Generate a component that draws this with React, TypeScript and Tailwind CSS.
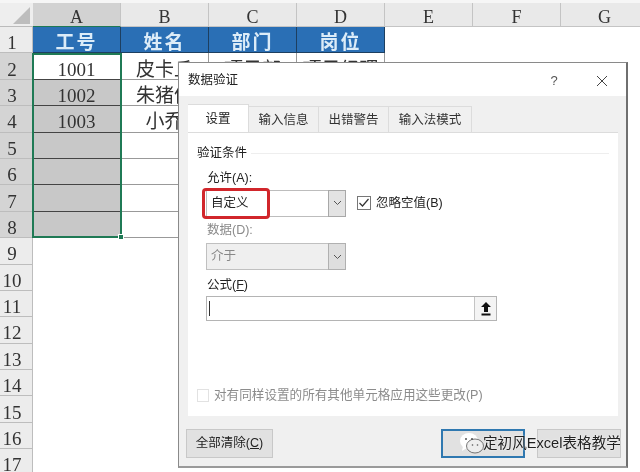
const columns = ['A', 'B', 'C', 'D', 'E', 'F', 'G'];
const rowNumbers = Array.from({ length: 17 }, (_, i) => i + 1);

const cells: Record<number, string[]> = {
    1: ['工号', '姓名', '部门', '岗位'],
    2: ['1001', '皮卡丘', '项目部', '项目经理'],
    3: ['1002', '朱猪侠', '', ''],
    4: ['1003', '小乔', '', ''],
};

const uiFont = "font-['Liberation_Sans','Noto_Sans_CJK_SC',sans-serif]";
const sheetFont = "font-['Liberation_Serif','Noto_Sans_CJK_SC',serif]";

const Sheet = () => (
    <div className={`${sheetFont} w-[640px] h-[472px] overflow-hidden bg-white text-[#333]`}>
        <div className="flex h-[27px] pt-[3px] bg-[#f6f6f6]">
            <div className="relative w-[33px] shrink-0 bg-[#eeeeee] border-b border-[#bbb]">
                <div className="absolute right-[3px] bottom-[2px] w-0 h-0 border-l-[17px] border-l-transparent border-b-[17px] border-b-[#bdbdbd]" />
            </div>
            {columns.map((col) => (
                <div
                    key={col}
                    className={`w-[88px] shrink-0 flex items-center justify-center pt-[5px] leading-none text-[18px] border-b border-r border-[#c4c4c4] ${col === 'A' ? 'bg-[#d2d2d2] border-b-[#1f7a55]' : 'bg-[#e9e9e9]'}`}
                >
                    {col}
                </div>
            ))}
        </div>
        {rowNumbers.map((row) => (
            <div key={row} className="flex h-[26.4px]">
                <div className={`w-[33px] shrink-0 flex items-center justify-center pt-[6px] pr-[8px] leading-none text-[19px] border-b border-r border-[#bdbdbd] ${row >= 2 && row <= 8 ? 'bg-[#d4d4d4]' : 'bg-[#ececec]'}`}>
                    {row}
                </div>
                {columns.map((col, i) => {
                    const text = cells[row]?.[i] ?? '';
                    const isHead = row === 1 && i < 4;
                    const isSelected = i === 0 && row >= 3 && row <= 8;
                    const inTable = i < 4 && row <= 8;
                    return (
                        <div
                            key={col}
                            className={`w-[88px] shrink-0 flex items-center justify-center pt-[6px] leading-none text-[19px] whitespace-nowrap overflow-hidden
                                ${isHead ? 'bg-[#2a6fb5] text-[#dcecf8] font-bold tracking-[2px] border-b border-r border-[#1d3f60]' : ''}
                                ${isSelected ? 'bg-[#c8c8c8]' : ''}
                                ${inTable && !isHead && i === 0 ? 'border-b border-r border-[#444]' : ''}
                                ${inTable && !isHead && i > 0 ? 'border-b border-r border-[#999]' : ''}`}
                        >
                            {text}
                        </div>
                    );
                })}
            </div>
        ))}
    </div>
);

const Tab = ({ label, active, width }: { label: string; active?: boolean; width: string }) => (
    <div
        className={`${width} flex items-center justify-center pt-[2px] text-[12.5px] border-t border-r border-[#dcdcdc] ${active ? 'h-[28px] bg-white -mt-[2px] relative z-10 text-[#222]' : 'h-[26px] bg-[#f0f0f0] text-[#333]'}`}
    >
        {label}
    </div>
);

const Dialog = () => (
    <div className={`${uiFont} absolute left-[178px] top-[62px] w-[450px] h-[406px] flex flex-col bg-[#f0f0f0] border-t border-l border-[#8a8a8a] border-r-2 border-r-[#6f6f6f] border-b-2 border-b-[#9a9a9a] text-[#222]`}>
        <div className="h-[33px] shrink-0 bg-white flex items-center pl-[9px] pt-[2px] text-[12.5px]">
            <span className="flex-1">数据验证</span>
            <span className="w-[20px] text-center text-[13px] text-[#555] mr-[32px]">?</span>
            <svg width="12" height="12" viewBox="0 0 12 12" className="mr-[18px]">
                <path d="M1 1l10 10M11 1L1 11" stroke="#444" strokeWidth="1" fill="none" />
            </svg>
        </div>
        <div className="flex pl-[9px] mt-[10px] h-[26px] shrink-0">
            <Tab label="设置" active width="w-[61px]" />
            <Tab label="输入信息" width="w-[70px]" />
            <Tab label="出错警告" width="w-[70px]" />
            <Tab label="输入法模式" width="w-[83px]" />
        </div>
        <div className="ml-[9px] w-[430px] h-[284px] shrink-0 bg-white border-t border-[#dcdcdc] pl-[9px] flex flex-col">
            <div className="flex items-center h-[18px] mt-[11px] text-[12.5px]">
                <span>验证条件</span>
                <span className="ml-[4px] w-[358px] border-t border-[#eeeeee]" />
            </div>
            <div className="mt-[8px] ml-[10px] h-[16px] text-[12.5px] leading-[16px]">允许(A):</div>
            <div className="flex items-center mt-[3px] ml-[9px] h-[28px]">
                <div className="relative w-[122px] h-[27px] bg-white border-y border-l border-[#bdbdbd] flex items-center pl-[4px] pt-[1px] text-[12.5px]">
                    自定义
                    <div className="absolute -left-[5px] -top-[3px] w-[68px] h-[31px] border-[3px] border-[#d1262b] rounded-[4px]" />
                </div>
                <div className="w-[18px] h-[27px] bg-[#e3e3e3] border border-[#a8a8a8] flex items-center justify-center">
                    <svg width="9" height="6" viewBox="0 0 9 6"><path d="M1 1l3.5 3.5L8 1" stroke="#555" fill="none" /></svg>
                </div>
                <div className="ml-[11px] -mt-[1px] w-[14px] h-[14px] border border-[#777] flex items-center justify-center bg-white">
                    <svg width="12" height="10" viewBox="0 0 12 10"><path d="M1.5 5l3 3 6-7" stroke="#333" strokeWidth="1.2" fill="none" /></svg>
                </div>
                <span className="ml-[5px] text-[12.5px]">忽略空值(B)</span>
            </div>
            <div className="mt-[5px] ml-[10px] h-[16px] text-[12.5px] leading-[16px] text-[#8a8a8a]">数据(D):</div>
            <div className="flex mt-[5px] ml-[9px] h-[27px]">
                <div className="w-[122px] bg-[#efefef] border-y border-l border-[#c0c0c0] flex items-center pl-[4px] text-[12.5px] text-[#888]">介于</div>
                <div className="w-[18px] bg-[#dedede] border border-[#b0b0b0] flex items-center justify-center">
                    <svg width="9" height="6" viewBox="0 0 9 6"><path d="M1 1l3.5 3.5L8 1" stroke="#555" fill="none" /></svg>
                </div>
            </div>
            <div className="mt-[7px] ml-[10px] h-[16px] text-[12.5px] leading-[16px]">公式(<span className="underline">F</span>)</div>
            <div className="flex mt-[3px] ml-[9px] h-[25px] w-[291px] border border-[#b4b4b4] bg-white">
                <div className="flex-1 flex items-center pl-[2px]">
                    <div className="w-px h-[15px] bg-[#333]" />
                </div>
                <div className="w-[22px] bg-[#f4f4f4] border-l border-[#c4c4c4] flex items-center justify-center">
                    <svg width="12" height="15" viewBox="0 0 12 15">
                        <path d="M6 1l5 5H8v5H4V6H1z" fill="#111" />
                        <rect x="1.5" y="12.5" width="9" height="2" fill="#111" />
                    </svg>
                </div>
            </div>
            <div className="flex items-center mt-[67px] h-[14px]">
                <div className="w-[12px] h-[13px] border border-[#e2e2e2] bg-white" />
                <span className="ml-[5px] text-[12.6px] text-[#8c8c8c] whitespace-nowrap">对有同样设置的所有其他单元格应用这些更改(P)</span>
            </div>
        </div>
        <div className="flex items-start pl-[7px] mt-[13px]">
            <div className="w-[87px] h-[29px] bg-[#e1e1e1] border border-[#c8c8c8] flex items-center justify-center text-[12.5px] text-[#222]">
                全部清除(<span className="underline">C</span>)
            </div>
            <div className="ml-[168px] w-[84px] h-[29px] bg-[#e1e1e1] border-2 border-[#2f78b0]" />
            <div className="ml-[12px] w-[84px] h-[29px] bg-[#e1e1e1] border border-[#c8c8c8]" />
        </div>
    </div>
);

const Watermark = () => (
    <div className={`${uiFont} absolute left-[459px] top-[432px] flex items-center`}>
        <svg width="26" height="24" viewBox="0 0 26 24">
            <ellipse cx="10" cy="9" rx="9" ry="8" fill="#fff" />
            <path d="M4 14l-1 5 5-3z" fill="#fff" />
            <ellipse cx="16" cy="14" rx="8.5" ry="7" fill="#eeeeee" stroke="#555" strokeWidth="0.8" />
            <circle cx="7" cy="7" r="1" fill="#555" />
            <circle cx="13" cy="7" r="1" fill="#555" />
            <circle cx="13.5" cy="13" r="0.8" fill="#555" />
            <circle cx="18.5" cy="13" r="0.8" fill="#555" />
        </svg>
        <span className="-ml-[2px] text-[14.6px] text-[#222] whitespace-nowrap [text-shadow:0_0_2px_#fff]">定初风Excel表格教学</span>
    </div>
);

const App = () => {
    return (
        <div className="relative w-[640px] h-[472px] overflow-hidden blur-[0.4px]">
            <Sheet />
            <div className="absolute left-[32px] top-[53px] w-[90px] h-[185px] border-2 border-[#1f7a55]" />
            <div className="absolute left-[118px] top-[234px] w-[6px] h-[6px] bg-[#1f7a55] border border-white" />
            <Dialog />
            <Watermark />
        </div>
    );
};

export default App;
